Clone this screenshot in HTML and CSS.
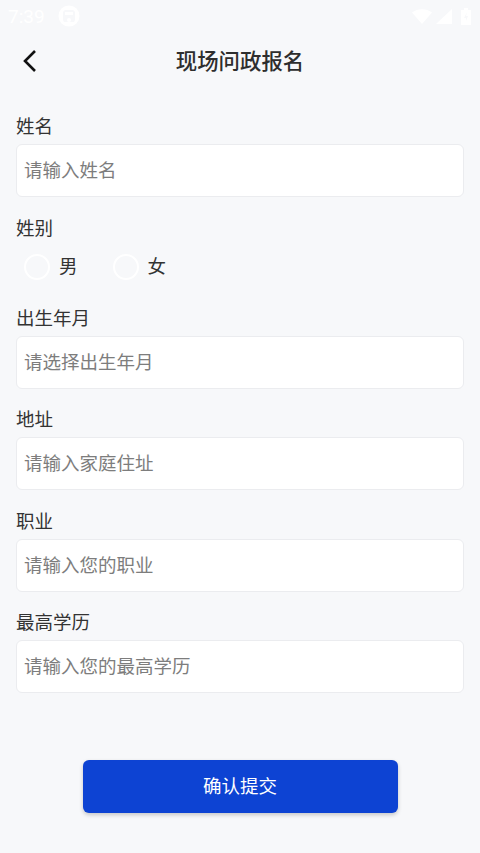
FILE: index.html
```html
<!DOCTYPE html>
<html lang="zh-CN">
<head>
    <meta charset="UTF-8">
    <meta name="viewport" content="width=device-width, initial-scale=1.0">
    <title>现场问政报名</title>
    <link rel="stylesheet" href="styles.css">
</head>
<body>
    <div class="status-bar">
        <div class="status-left">
            <span class="status-time">7:39</span>
            <svg class="status-app" width="22" height="22" viewBox="0 0 22 22">
                <circle cx="11" cy="11" r="10.500" fill="#fff"/>
                <path d="M5 15V8a3 3 0 0 1 3-3h6a3 3 0 0 1 3 3v7l-1 2H6z" fill="#f7f8fa"/>
                <rect x="7" y="7" width="8" height="3" fill="#fff"/>
                <circle cx="11" cy="15" r="2" fill="#fff"/>
            </svg>
        </div>
        <div class="status-right">
            <svg class="wifi" width="20" height="15" viewBox="0 0 20 15"><path d="M0 3.500C5.500-1 14.500-1 20 3.500L10 15z" fill="#fff"/></svg>
            <svg class="signal" width="16" height="15" viewBox="0 0 16 15"><path d="M16 0V15H0z" fill="#fff"/></svg>
            <svg class="battery" width="10" height="17" viewBox="0 0 10 17"><path d="M3 0h4v2h3v15H0V2h3z" fill="#fff"/><path d="M6 4L3 10h2v3l2-5H5z" fill="#f7f8fa"/></svg>
        </div>
    </div>

    <header class="title-bar">
        <svg class="back-icon" width="16" height="24" viewBox="0 0 16 24">
            <path d="M13 2L3 12l10 10" fill="none" stroke="#111" stroke-width="2.600"/>
        </svg>
        <h1>现场问政报名</h1>
    </header>

    <form class="form">
        <div class="field">
            <label>姓名</label>
            <div class="input">请输入姓名</div>
        </div>
        <div class="field field-radio">
            <label>姓别</label>
            <div class="radio-row">
                <div class="radio-item"><span class="radio"></span>男</div>
                <div class="radio-item"><span class="radio"></span>女</div>
            </div>
        </div>
        <div class="field">
            <label>出生年月</label>
            <div class="input">请选择出生年月</div>
        </div>
        <div class="field">
            <label>地址</label>
            <div class="input">请输入家庭住址</div>
        </div>
        <div class="field">
            <label>职业</label>
            <div class="input">请输入您的职业</div>
        </div>
        <div class="field">
            <label>最高学历</label>
            <div class="input">请输入您的最高学历</div>
        </div>
        <button type="button" class="submit">确认提交</button>
    </form>
</body>
</html>
```

FILE: styles.css
```css
* {
    margin: 0;
    padding: 0;
    box-sizing: border-box;
    font-family: Roboto, "Noto Sans CJK SC", sans-serif;
}

body {
    width: 480px;
    height: 853px;
    overflow: hidden;
    background-color: #f7f8fa;
    color: #333;
}

/* Status bar */
.status-bar {
    height: 32px;
    padding: 0 9px 0 8px;
    display: flex;
    align-items: center;
    justify-content: space-between;
}

.status-left {
    display: flex;
    align-items: center;
    gap: 13px;
}

.status-time {
    color: #fff;
    font-size: 19px;
}

.status-right {
    display: flex;
    align-items: center;
}

.signal {
    margin-left: 4px;
}

.battery {
    margin-left: 9px;
}

/* Title */
.title-bar {
    height: 56px;
    padding-bottom: 2px;
    display: flex;
    align-items: center;
    justify-content: center;
    position: relative;
}

.back-icon {
    position: absolute;
    left: 22px;
    top: 17px;
}

.title-bar h1 {
    font-size: 21.400px;
    font-weight: 500;
    color: #2e2e2e;
}

/* Form */
.form {
    padding: 7.500px 16px 0;
}

.field {
    padding-top: 19.500px;
}

.field label {
    display: block;
    font-size: 18.500px;
    line-height: 24px;
    margin-bottom: 5px;
    color: #333;
}

.input {
    height: 53px;
    padding: 0 7px 3px;
    display: flex;
    align-items: center;
    background-color: #fff;
    border: 1px solid #ebecef;
    border-radius: 6px;
    font-size: 18.500px;
    color: #7d7d7d;
}

.field-radio {
    padding-bottom: 6.500px;
}

.field-radio label {
    margin-bottom: 13px;
}

.radio-row {
    display: flex;
    gap: 35px;
    padding-left: 8px;
}

.radio-item {
    display: flex;
    align-items: center;
    gap: 9px;
    font-size: 18.500px;
    line-height: 27px;
}

.radio {
    width: 26px;
    height: 26px;
    border: 2px solid #fff;
    border-radius: 50%;
}

.submit {
    display: block;
    width: 315px;
    height: 53px;
    margin: 67px auto 0;
    padding-bottom: 3px;
    background-color: #0d43d3;
    border: none;
    border-radius: 6px;
    box-shadow: 0 2px 4px rgba(0, 0, 0, 0.2);
    color: #fff;
    font-size: 18.500px;
}
```
